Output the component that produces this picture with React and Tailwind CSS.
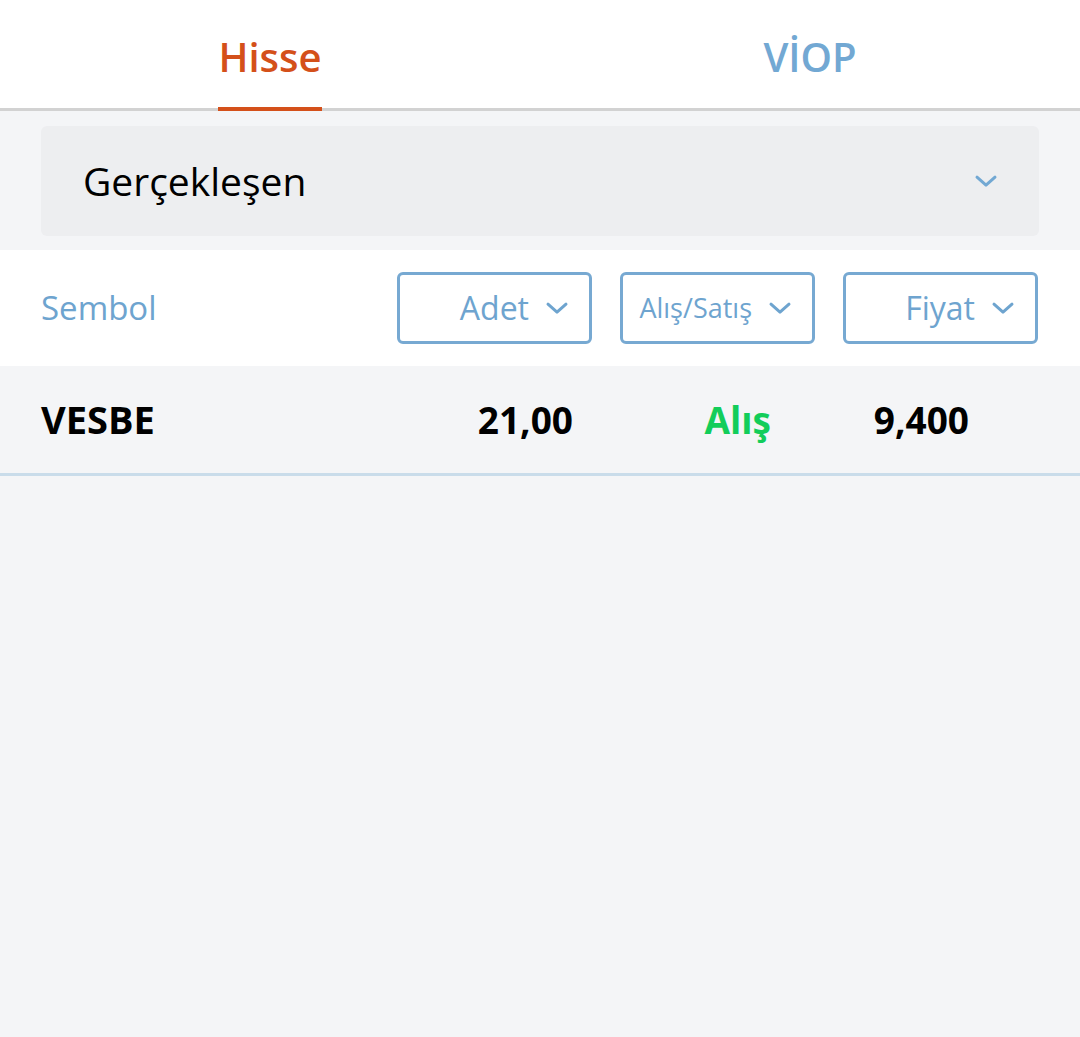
const Chevron = ({ size = 26, className = '' }) => (
  <svg width={size} height={size * 0.6} viewBox="0 0 24 14" fill="none" className={className}>
    <path d="M3 3 L12 11 L21 3" stroke="currentColor" strokeWidth="3" strokeLinecap="round" strokeLinejoin="round" />
  </svg>
);

function SortButton({ label, textClass }) {
  return (
    <button className="w-[195px] h-[72px] border-[3px] border-[#77a9d2] rounded-[6px] bg-white flex items-center justify-end gap-[16px] pr-[20px] pl-[10px] text-[#6ea4cf]">
      <span className={textClass}>{label}</span>
      <Chevron size={24} />
    </button>
  );
}

export default function App() {
  return (
    <div className="min-h-[1037px] bg-[#f4f5f7] font-['Open_Sans',sans-serif]">
      {/* tabs */}
      <div className="bg-white h-[111px] flex border-b-[3px] border-[#d2d2d2]">
        <div className="flex-1 flex justify-center">
          <div className="relative h-full flex items-center">
            <span className="text-[40px] font-semibold text-[#d4501a] leading-none mt-[6px]">Hisse</span>
            <div className="absolute left-0 right-0 -bottom-[3px] h-[4px] bg-[#d4501a]" />
          </div>
        </div>
        <div className="flex-1 flex justify-center items-center">
          <span className="text-[40px] font-semibold text-[#72a8d3] leading-none mt-[6px]">VİOP</span>
        </div>
      </div>

      {/* filter dropdown */}
      <div className="px-[41px] pt-[15px] pb-[14px]">
        <div className="h-[110px] bg-[#edeef0] rounded-[6px] flex items-center justify-between pl-[42px] pr-[41px]">
          <span className="text-[39px] text-black">Gerçekleşen</span>
          <Chevron size={24} className="text-[#72a8d3]" />
        </div>
      </div>

      {/* header row */}
      <div className="bg-white h-[116px] flex items-center pl-[41px] pr-[42px]">
        <span className="flex-1 text-[33px] text-[#6ea4cf]">Sembol</span>
        <div className="flex gap-[28px]">
          <SortButton label="Adet" textClass="text-[32px]" />
          <SortButton label="Alış/Satış" textClass="text-[27px]" />
          <SortButton label="Fiyat" textClass="text-[32px]" />
        </div>
      </div>

      {/* data row */}
      <div className="h-[110px] flex items-center pl-[41px] pr-[42px] border-b-[3px] border-[#c9dcea] bg-[#f4f5f7]">
        <span className="flex-1 text-[38px] font-bold text-black">VESBE</span>
        <div className="flex gap-[28px] text-[37px] font-bold">
          <span className="w-[195px] text-right pr-[19px] text-black">21,00</span>
          <span className="w-[195px] text-right pr-[44px] text-[#12cd5a]">Alış</span>
          <span className="w-[195px] text-right pr-[69px] text-black">9,400</span>
        </div>
      </div>
    </div>
  );
}
